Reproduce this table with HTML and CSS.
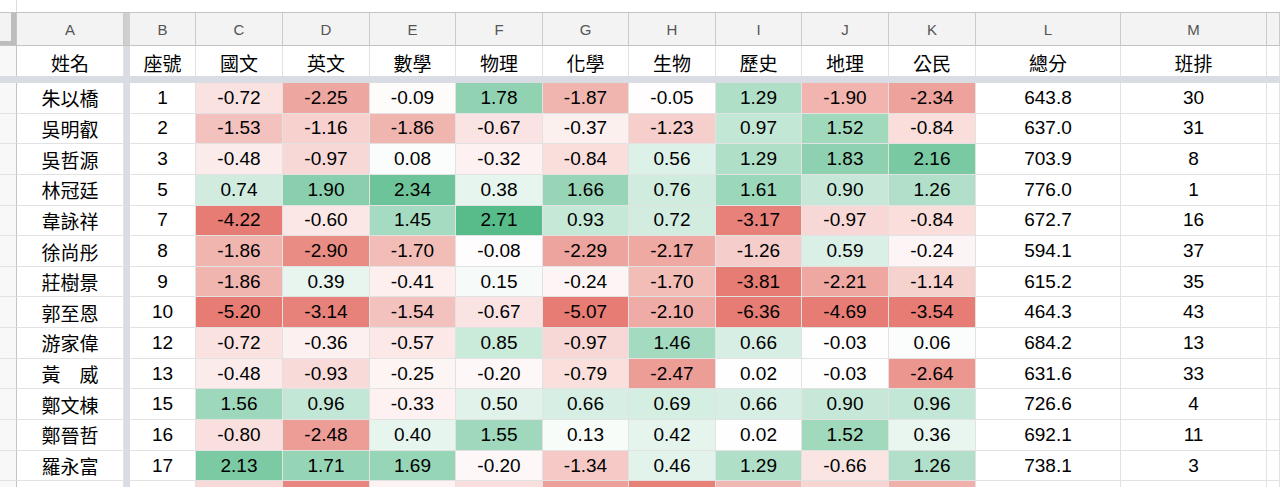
FILE: index.html
```html
<!DOCTYPE html>
<html lang="zh-Hant">
<head>
<meta charset="utf-8">
<title>成績表</title>
<link rel="stylesheet" href="styles.css">
</head>
<body>
<div class="top"><div class="top-l"></div></div>
<div class="row colhead">
  <div class="corner"></div><div class="ch">A</div><div class="fz"></div><div class="ch">B</div><div class="ch">C</div><div class="ch">D</div><div class="ch">E</div><div class="ch">F</div><div class="ch">G</div><div class="ch">H</div><div class="ch">I</div><div class="ch">J</div><div class="ch">K</div><div class="ch">L</div><div class="ch">M</div><div class="ch"></div>
</div>
<div class="row hdr">
  <div class="rh"></div><div class="c">姓名</div><div class="fz"></div><div class="c">座號</div><div class="c">國文</div><div class="c">英文</div><div class="c">數學</div><div class="c">物理</div><div class="c">化學</div><div class="c">生物</div><div class="c">歷史</div><div class="c">地理</div><div class="c">公民</div><div class="c">總分</div><div class="c">班排</div><div class="c"></div>
</div>
<div class="fzrow"></div>
<div class="row data"><div class="rh"></div><div class="c">朱以橋</div><div class="fz"></div><div class="c">1</div><div class="c sc">-0.72</div><div class="c sc">-2.25</div><div class="c sc">-0.09</div><div class="c sc">1.78</div><div class="c sc">-1.87</div><div class="c sc">-0.05</div><div class="c sc">1.29</div><div class="c sc">-1.90</div><div class="c sc">-2.34</div><div class="c">643.8</div><div class="c">30</div><div class="c"></div></div>
<div class="row data"><div class="rh"></div><div class="c">吳明叡</div><div class="fz"></div><div class="c">2</div><div class="c sc">-1.53</div><div class="c sc">-1.16</div><div class="c sc">-1.86</div><div class="c sc">-0.67</div><div class="c sc">-0.37</div><div class="c sc">-1.23</div><div class="c sc">0.97</div><div class="c sc">1.52</div><div class="c sc">-0.84</div><div class="c">637.0</div><div class="c">31</div><div class="c"></div></div>
<div class="row data"><div class="rh"></div><div class="c">吳哲源</div><div class="fz"></div><div class="c">3</div><div class="c sc">-0.48</div><div class="c sc">-0.97</div><div class="c sc">0.08</div><div class="c sc">-0.32</div><div class="c sc">-0.84</div><div class="c sc">0.56</div><div class="c sc">1.29</div><div class="c sc">1.83</div><div class="c sc">2.16</div><div class="c">703.9</div><div class="c">8</div><div class="c"></div></div>
<div class="row data"><div class="rh"></div><div class="c">林冠廷</div><div class="fz"></div><div class="c">5</div><div class="c sc">0.74</div><div class="c sc">1.90</div><div class="c sc">2.34</div><div class="c sc">0.38</div><div class="c sc">1.66</div><div class="c sc">0.76</div><div class="c sc">1.61</div><div class="c sc">0.90</div><div class="c sc">1.26</div><div class="c">776.0</div><div class="c">1</div><div class="c"></div></div>
<div class="row data"><div class="rh"></div><div class="c">韋詠祥</div><div class="fz"></div><div class="c">7</div><div class="c sc">-4.22</div><div class="c sc">-0.60</div><div class="c sc">1.45</div><div class="c sc">2.71</div><div class="c sc">0.93</div><div class="c sc">0.72</div><div class="c sc">-3.17</div><div class="c sc">-0.97</div><div class="c sc">-0.84</div><div class="c">672.7</div><div class="c">16</div><div class="c"></div></div>
<div class="row data"><div class="rh"></div><div class="c">徐尚彤</div><div class="fz"></div><div class="c">8</div><div class="c sc">-1.86</div><div class="c sc">-2.90</div><div class="c sc">-1.70</div><div class="c sc">-0.08</div><div class="c sc">-2.29</div><div class="c sc">-2.17</div><div class="c sc">-1.26</div><div class="c sc">0.59</div><div class="c sc">-0.24</div><div class="c">594.1</div><div class="c">37</div><div class="c"></div></div>
<div class="row data"><div class="rh"></div><div class="c">莊樹景</div><div class="fz"></div><div class="c">9</div><div class="c sc">-1.86</div><div class="c sc">0.39</div><div class="c sc">-0.41</div><div class="c sc">0.15</div><div class="c sc">-0.24</div><div class="c sc">-1.70</div><div class="c sc">-3.81</div><div class="c sc">-2.21</div><div class="c sc">-1.14</div><div class="c">615.2</div><div class="c">35</div><div class="c"></div></div>
<div class="row data"><div class="rh"></div><div class="c">郭至恩</div><div class="fz"></div><div class="c">10</div><div class="c sc">-5.20</div><div class="c sc">-3.14</div><div class="c sc">-1.54</div><div class="c sc">-0.67</div><div class="c sc">-5.07</div><div class="c sc">-2.10</div><div class="c sc">-6.36</div><div class="c sc">-4.69</div><div class="c sc">-3.54</div><div class="c">464.3</div><div class="c">43</div><div class="c"></div></div>
<div class="row data"><div class="rh"></div><div class="c">游家偉</div><div class="fz"></div><div class="c">12</div><div class="c sc">-0.72</div><div class="c sc">-0.36</div><div class="c sc">-0.57</div><div class="c sc">0.85</div><div class="c sc">-0.97</div><div class="c sc">1.46</div><div class="c sc">0.66</div><div class="c sc">-0.03</div><div class="c sc">0.06</div><div class="c">684.2</div><div class="c">13</div><div class="c"></div></div>
<div class="row data"><div class="rh"></div><div class="c">黃　威</div><div class="fz"></div><div class="c">13</div><div class="c sc">-0.48</div><div class="c sc">-0.93</div><div class="c sc">-0.25</div><div class="c sc">-0.20</div><div class="c sc">-0.79</div><div class="c sc">-2.47</div><div class="c sc">0.02</div><div class="c sc">-0.03</div><div class="c sc">-2.64</div><div class="c">631.6</div><div class="c">33</div><div class="c"></div></div>
<div class="row data"><div class="rh"></div><div class="c">鄭文棟</div><div class="fz"></div><div class="c">15</div><div class="c sc">1.56</div><div class="c sc">0.96</div><div class="c sc">-0.33</div><div class="c sc">0.50</div><div class="c sc">0.66</div><div class="c sc">0.69</div><div class="c sc">0.66</div><div class="c sc">0.90</div><div class="c sc">0.96</div><div class="c">726.6</div><div class="c">4</div><div class="c"></div></div>
<div class="row data"><div class="rh"></div><div class="c">鄭晉哲</div><div class="fz"></div><div class="c">16</div><div class="c sc">-0.80</div><div class="c sc">-2.48</div><div class="c sc">0.40</div><div class="c sc">1.55</div><div class="c sc">0.13</div><div class="c sc">0.42</div><div class="c sc">0.02</div><div class="c sc">1.52</div><div class="c sc">0.36</div><div class="c">692.1</div><div class="c">11</div><div class="c"></div></div>
<div class="row data"><div class="rh"></div><div class="c">羅永富</div><div class="fz"></div><div class="c">17</div><div class="c sc">2.13</div><div class="c sc">1.71</div><div class="c sc">1.69</div><div class="c sc">-0.20</div><div class="c sc">-1.34</div><div class="c sc">0.46</div><div class="c sc">1.29</div><div class="c sc">-0.66</div><div class="c sc">1.26</div><div class="c">738.1</div><div class="c">3</div><div class="c"></div></div>
<div class="row data"><div class="rh"></div><div class="c">蔡永羅</div><div class="fz"></div><div class="c">18</div><div class="c sc">-0.92</div><div class="c sc">-3.02</div><div class="c sc">-0.30</div><div class="c sc">-0.78</div><div class="c sc">-2.41</div><div class="c sc">-3.20</div><div class="c sc">-1.82</div><div class="c sc">-1.05</div><div class="c sc">-1.96</div><div class="c">598.4</div><div class="c">36</div><div class="c"></div></div>
<script src="script.js"></script>
</body>
</html>
```

FILE: styles.css
```css
* { box-sizing: border-box; }
html, body {
  margin: 0;
  padding: 0;
  background: #ffffff;
  width: 1280px;
  height: 487px;
  overflow: hidden;
}
body {
  font-family: "Liberation Sans", Arial, "Noto Sans CJK TC", sans-serif;
  color: #000000;
}
.top {
  height: 12px;
  display: flex;
}
.top-l {
  width: 17px;
  border-right: 1px solid #dcdcdc;
}
.row {
  display: grid;
  grid-template-columns: 17px 107px 6px 66px 87px 87px 86px 87px 86px 87px 86px 87px 87px 145px 146px 1fr;
}
.colhead {
  height: 34px;
  background: #f3f3f3;
  border-top: 1px solid #c4c4c4;
}
.corner {
  background: #f3f3f3;
  box-shadow: inset -5px -4px 0 #bdbdbd;
  border-right: 1px solid #c4c4c4;
  border-bottom: 1px solid #c4c4c4;
}
.ch {
  display: flex;
  align-items: center;
  justify-content: center;
  font-size: 15px;
  color: #555555;
  border-right: 1px solid #cacaca;
  border-bottom: 1px solid #c4c4c4;
}
.colhead .fz {
  background: #cfcfcf;
  border-bottom: 1px solid #c4c4c4;
}
.fz {
  background: #d9dde3;
}
.hdr {
  height: 30px;
}
.data {
  height: 30.65px;
}
.rh {
  background: #f8f8f8;
  border-right: 1px solid #c4c4c4;
  border-bottom: 1px solid #e2e2e2;
}
.hdr .rh {
  border-bottom: none;
}
.c {
  display: flex;
  align-items: center;
  justify-content: center;
  font-size: 19px;
  white-space: nowrap;
  overflow: hidden;
  border-right: 1px solid #e2e2e2;
  border-bottom: 1px solid #e2e2e2;
}
.hdr .c {
  border-bottom: none;
  padding-top: 2px;
}
.fzrow {
  height: 7px;
  background: #d9dde3;
}
```

FILE: script.js
```js
(function () {
  var RED = [230, 124, 115];
  var GREEN = [87, 187, 138];
  var RED_MIN = -3.3;
  var GREEN_MAX = 2.71;
  function mix(c, t) {
    return [0, 1, 2].map(function (i) {
      return Math.round(255 + (c[i] - 255) * t);
    });
  }
  var cells = document.querySelectorAll('.sc');
  for (var k = 0; k < cells.length; k++) {
    var v = parseFloat(cells[k].textContent);
    var col;
    if (v < 0) {
      col = mix(RED, Math.min(1, v / RED_MIN));
    } else {
      col = mix(GREEN, Math.min(1, v / GREEN_MAX));
    }
    cells[k].style.backgroundColor = 'rgb(' + col.join(',') + ')';
  }
})();
```
